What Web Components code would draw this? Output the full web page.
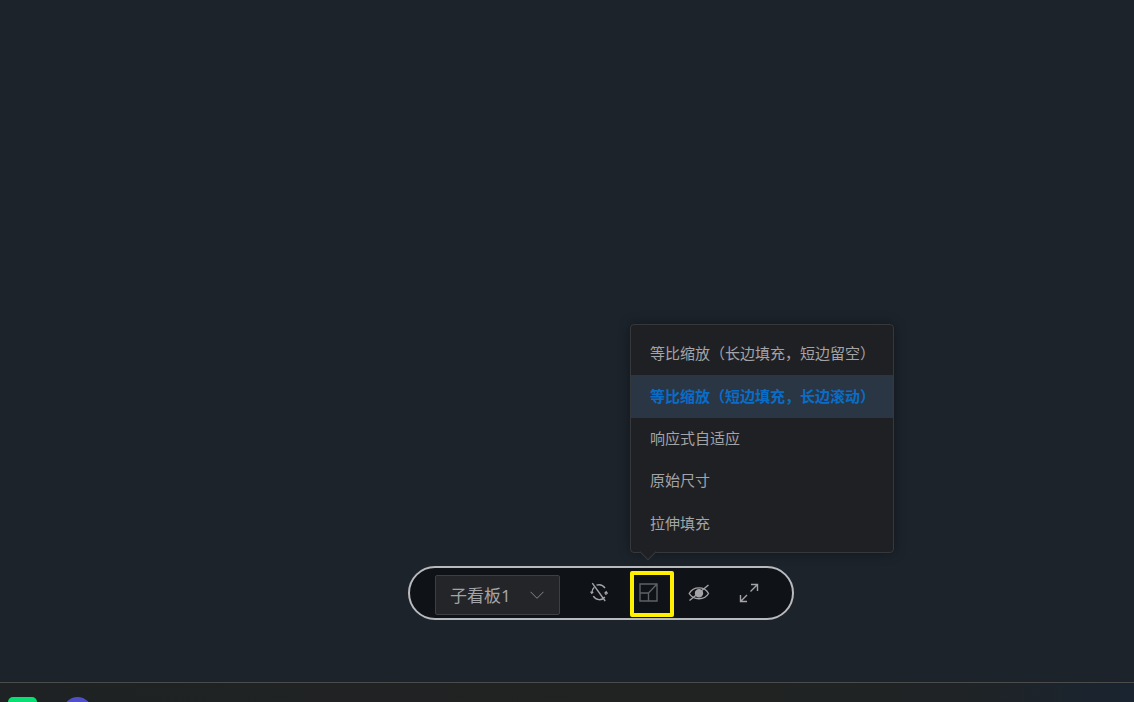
<!DOCTYPE html>
<html lang="zh-CN">
<head>
<meta charset="UTF-8">
<meta name="viewport" content="width=device-width, initial-scale=1">
<title>子看板1</title>
<style>
    html, body { height: 100%; }
    body {
        margin: 0;
        overflow: hidden;
        background: #1c232b;
        color: #a3a4a7;
        font-family: "Noto Sans", "Noto Sans CJK SC", sans-serif;
        font-size: 15px;
    }
</style>
</head>
<body>
<board-app>
    <tool-bar>
        <board-select label="看板"><option>子看板1</option></board-select>
        <tool-button icon="refresh-off" label="停止刷新"></tool-button>
        <tool-button icon="scale" label="缩放方式" marked>
            <scale-menu>
                <menu-option>等比缩放（长边填充，短边留空）</menu-option>
                <menu-option selected>等比缩放（短边填充，长边滚动）</menu-option>
                <menu-option>响应式自适应</menu-option>
                <menu-option>原始尺寸</menu-option>
                <menu-option>拉伸填充</menu-option>
            </scale-menu>
        </tool-button>
        <tool-button icon="eye-off" label="隐藏"></tool-button>
        <tool-button icon="expand" label="全屏"></tool-button>
    </tool-bar>
    <task-bar slot="footer"></task-bar>
</board-app>

<script>
// Line icons, all on a 22 x 22 grid
const ICONS = {
    'refresh-off': `
        <path d="M4.3 1.2 17.2 19"/>
        <path d="M8.5 3.2C11.500 2.200 15 3.200 17 6M6.300 5.200C4.500 6.800 3.800 8.500 3.800 10.800M5.300 14.200C8 18.600 14 18.800 16.800 15M17.800 12.800 18.200 10.200"/>
        <path d="M2.600 9.600 3.800 11.200 5.200 9.800M16.600 11.600 18.200 9.900 19.600 11.600"/>`,
    'scale': `
        <path d="M2 2H19V19H2ZM2 11H10.500V19M10.500 11 19 2"/>`,
    'eye-off': `
        <path d="M1.2 11.5C5.5 4 16.500 4 20.500 11.500 16.500 18.500 5.500 18.500 1.200 11.500Z"/>
        <circle cx="11" cy="11.300" r="3.500" fill="currentColor"/>
        <path d="M1.500 18.500 20.500 3"/>`,
    'expand': `
        <path d="M13 2.500H19.500V9M19.500 2.500 12.500 9.500M2.500 13V19.500H9M2.500 19.500 9 13"/>`
};

class BoardApp extends HTMLElement {
    constructor() {
        super();
        this.attachShadow({ mode: 'open' }).innerHTML = `
            <style>
                :host { display: flex; flex-direction: column; height: 100vh; }
                main {
                    flex: 1;
                    display: flex;
                    justify-content: center;
                    align-items: flex-end;
                    padding: 0 0 62px 68px;
                }
            </style>
            <main><slot></slot></main>
            <slot name="footer"></slot>
        `;
    }
}

class ToolBar extends HTMLElement {
    constructor() {
        super();
        this.attachShadow({ mode: 'open' }).innerHTML = `
            <style>
                :host {
                    display: flex;
                    align-items: center;
                    padding: 3px 18px 1px 25px;
                    border: 2px solid #b9babd;
                    border-radius: 27px;
                    background: #0f1217;
                }
            </style>
            <slot></slot>
        `;
    }
}

class BoardSelect extends HTMLElement {
    connectedCallback() {
        const label = this.getAttribute('label');
        const root = this.attachShadow({ mode: 'open' });
        root.innerHTML = `
            <style>
                :host { display: grid; align-items: center; margin: 2px 14px 0 0; }
                select, svg { grid-area: 1 / 1; }
                select {
                    appearance: none;
                    box-sizing: border-box;
                    width: 125px;
                    height: 40px;
                    padding: 0 14px;
                    border: 1px solid #3e3f44;
                    border-radius: 2px;
                    background: #242529;
                    color: #a3a4a7;
                    font: inherit;
                    font-size: 17px;
                }
                svg {
                    justify-self: end;
                    margin-right: 16px;
                    fill: none;
                    stroke: #85868a;
                    pointer-events: none;
                }
            </style>
            <select aria-label="${label}"></select>
            <svg width="14" height="8" viewBox="0 0 14 8"><path d="M.5.8 7 7.300 13.500.8"/></svg>
        `;
        root.querySelector('select').append(...this.querySelectorAll('option'));
    }
}

class ToolButton extends HTMLElement {
    connectedCallback() {
        const icon = ICONS[this.getAttribute('icon')];
        const label = this.getAttribute('label');
        this.attachShadow({ mode: 'open' }).innerHTML = `
            <style>
                :host { display: block; position: relative; }
                button {
                    display: flex;
                    justify-content: center;
                    align-items: center;
                    width: 50px;
                    height: 46px;
                    padding: 0 0 2px;
                    border: 0;
                    background: none;
                    color: #a3a4a7;
                }
                svg { fill: none; stroke: currentColor; stroke-width: 1.4; }
                :host([marked]) button { color: #606165; }
                /* highlight frame around the active tool */
                :host([marked])::after {
                    content: "";
                    position: absolute;
                    inset: 0 0 0 6px;
                    border: 4px solid #fff000;
                    border-radius: 2px;
                    pointer-events: none;
                }
            </style>
            <button type="button" aria-label="${label}">
                <svg width="22" height="22" viewBox="0 0 22 22">${icon}</svg>
            </button>
            <slot></slot>
        `;
    }
}

class ScaleMenu extends HTMLElement {
    constructor() {
        super();
        this.attachShadow({ mode: 'open' }).innerHTML = `
            <style>
                :host {
                    position: absolute;
                    left: 6px;
                    bottom: calc(100% + 18px);
                    padding: 8px 0 7px;
                    border: 1px solid #37383c;
                    border-radius: 4px;
                    background: #1f2024;
                    box-shadow: 0 0 12px rgba(0, 0, 0, .36);
                }
                .list {
                    display: grid;
                    grid-auto-rows: 1fr;
                    min-height: 212px;
                }
                /* arrow that points at the button */
                :host::after {
                    content: "";
                    position: absolute;
                    left: 11px;
                    bottom: -6px;
                    box-sizing: border-box;
                    width: 12px;
                    height: 12px;
                    border: solid #37383c;
                    border-width: 0 1px 1px 0;
                    background: #1f2024;
                    transform: rotate(45deg);
                }
            </style>
            <div class="list" role="menu"><slot></slot></div>
        `;
    }
}

class MenuOption extends HTMLElement {
    constructor() {
        super();
        this.attachShadow({ mode: 'open' }).innerHTML = `
            <style>
                :host { display: flex; }
                button {
                    flex: 1;
                    padding: 0 18px 2px 19px;
                    border: 0;
                    background: none;
                    color: inherit;
                    font: inherit;
                    font-family: "Noto Sans CJK SC", sans-serif;
                    line-height: 40px;
                    text-align: left;
                    white-space: nowrap;
                }
                :host([selected]) button {
                    background: #2b3645;
                    color: #096dc7;
                    font-weight: bold;
                }
            </style>
            <button type="button" role="menuitem"><slot></slot></button>
        `;
    }
}

class TaskBar extends HTMLElement {
    constructor() {
        super();
        this.attachShadow({ mode: 'open' }).innerHTML = `
            <style>
                :host {
                    display: flex;
                    gap: 26px;
                    height: 19px;
                    overflow: hidden;
                    border-top: 1px solid #4a4b4b;
                    background: linear-gradient(90deg, #1f2224, #212322 65%, #1f2326 85%, #192430);
                }
                i { flex: none; width: 29px; height: 29px; margin-top: 14px; }
                .green { margin-left: 8px; border-radius: 5px; background: #07e070; }
                .violet { border-radius: 50%; background: #4f50c9; }
            </style>
            <i class="green"></i>
            <i class="violet"></i>
        `;
    }
}

customElements.define('board-app', BoardApp);
customElements.define('tool-bar', ToolBar);
customElements.define('board-select', BoardSelect);
customElements.define('tool-button', ToolButton);
customElements.define('scale-menu', ScaleMenu);
customElements.define('menu-option', MenuOption);
customElements.define('task-bar', TaskBar);
</script>
</body>
</html>
